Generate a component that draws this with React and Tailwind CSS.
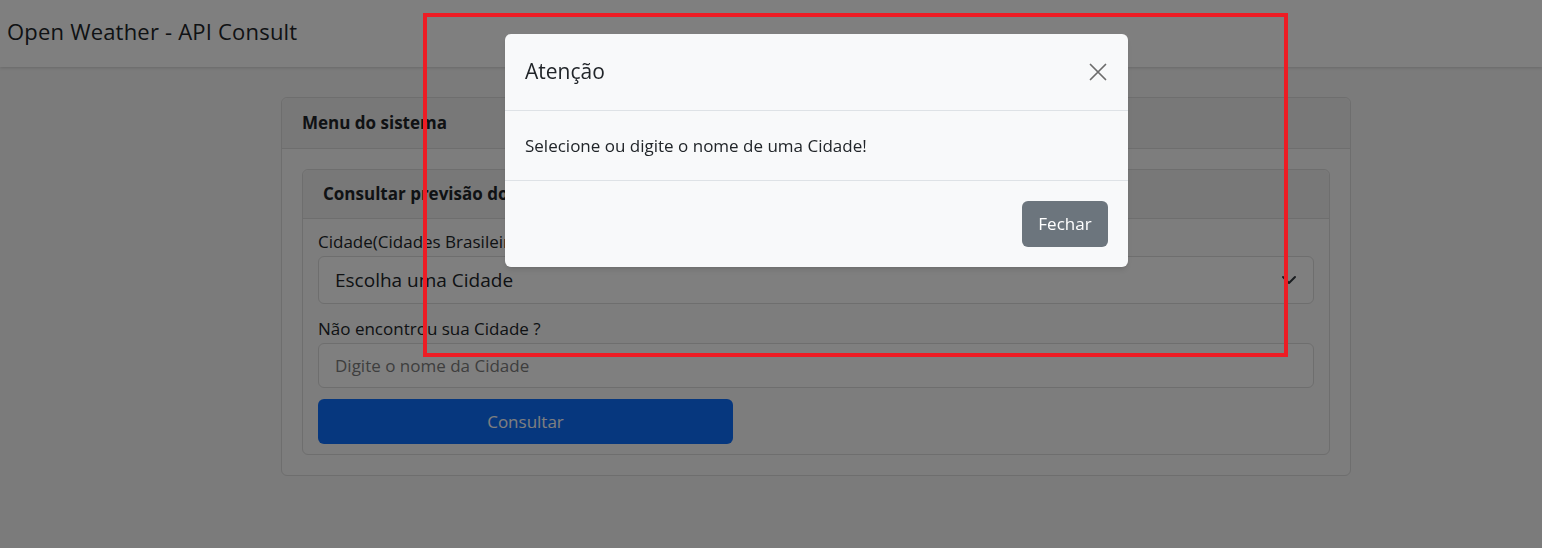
import React from 'react';

const App = () => {
  return (
    <div className="relative min-h-[548px] bg-[#f6f6f6] text-[#212529] font-['Open_Sans',sans-serif]">
      {/* Navbar */}
      <nav className="h-[67px] bg-white shadow-[0_1px_3px_rgba(0,0,0,0.15)] flex items-center px-[7px] pb-[5px]">
        <span className="text-[22px] leading-none tracking-[0.2px]">Open Weather - API Consult</span>
      </nav>

      {/* Main card */}
      <div className="ml-[281px] mt-[30px] w-[1070px] rounded-md border border-[#dcdcdc] bg-[#fafafa]">
        <div className="h-[51px] flex items-center px-5 border-b border-[#dcdcdc] bg-[#f0f0f0] rounded-t-md">
          <h5 className="text-[17px] font-bold">Menu do sistema</h5>
        </div>
        <div className="p-5">
          <div className="rounded-md border border-[#dcdcdc]">
            <div className="h-[49px] flex items-center px-5 border-b border-[#dcdcdc] bg-[#f0f0f0] rounded-t-md">
              <h5 className="text-[17px] font-bold">Consultar previsão do tempo</h5>
            </div>
            <div className="px-[15px] pt-[12px] pb-[10px]">
              <label className="block text-[17px] leading-[22px] mb-[3px]">Cidade(Cidades Brasileiras)</label>
              <div className="h-[48px] rounded-md border border-[#dcdcdc] bg-white flex items-center justify-between px-4">
                <span className="text-[19px]">Escolha uma Cidade</span>
                <svg width="16" height="16" viewBox="0 0 16 16" fill="none" stroke="#343a40" strokeWidth="2" strokeLinecap="round" strokeLinejoin="round">
                  <path d="M2 5l6 6 6-6" />
                </svg>
              </div>
              <label className="block text-[17px] leading-[22px] mt-[14px] mb-[3px]">Não encontrou sua Cidade ?</label>
              <div className="h-[45px] rounded-md border border-[#dcdcdc] bg-white flex items-center px-4">
                <span className="text-[17px] text-[#7c7c7c]">Digite o nome da Cidade</span>
              </div>
              <button className="mt-[11px] w-[415px] h-[45px] rounded-md bg-[#0d6efd] text-white text-[17px]">
                Consultar
              </button>
            </div>
          </div>
        </div>
      </div>

      {/* Backdrop */}
      <div className="fixed inset-0 bg-black/50" />

      {/* Modal */}
      <div className="fixed left-[505px] top-[34px] w-[623px] rounded-md bg-[#f8f9fa] shadow-md">
        <div className="h-[77px] flex items-center justify-between px-5 border-b border-[#dee2e6]">
          <h5 className="text-[21px]">Atenção</h5>
          <svg width="20" height="20" viewBox="0 0 16 16" fill="none" stroke="#6c6c6c" strokeWidth="1.4" strokeLinecap="round">
            <path d="M2 2l12 12M14 2L2 14" />
          </svg>
        </div>
        <div className="h-[70px] flex items-center px-5 border-b border-[#dee2e6]">
          <p className="text-[17px]">Selecione ou digite o nome de uma Cidade!</p>
        </div>
        <div className="h-[86px] flex items-center justify-end px-5">
          <button className="h-[46px] w-[86px] rounded-md bg-[#6c757d] text-white text-[17px]">Fechar</button>
        </div>
      </div>

      {/* Annotation */}
      <div className="absolute left-[423px] top-[13px] w-[865px] h-[344px] border-4 border-[#ed1c24] pointer-events-none" />
    </div>
  );
};

export default App;
